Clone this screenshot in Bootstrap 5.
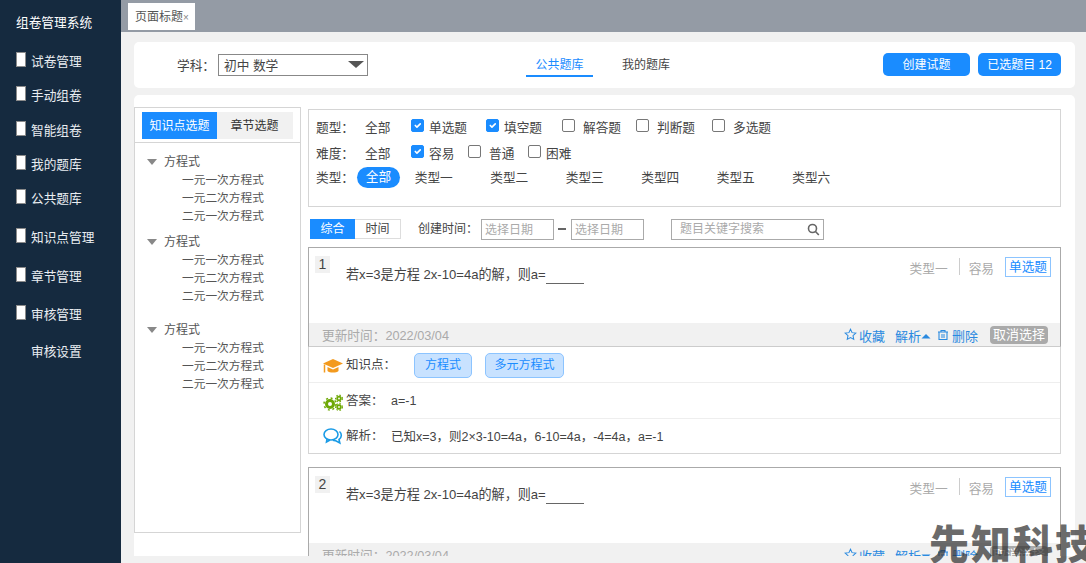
<!DOCTYPE html>
<html lang="zh">
<head>
<meta charset="utf-8">
<title>组卷管理系统</title>
<link rel="stylesheet" href="https://cdn.jsdelivr.net/npm/bootstrap@5.3.0/dist/css/bootstrap.min.css">
<style>
html,body{height:563px;overflow:hidden}
body{font-family:"Liberation Sans","Noto Sans CJK SC",sans-serif;font-size:12.7px;color:#444;background:#f1f1f1;line-height:18px;position:relative}
.shell{height:563px}
.side{width:121px;background:#152a3f;color:#e9edf1;padding-top:14px}
.side-title{padding-left:16px;height:31px;line-height:18px;color:#fff}
.side-item{height:34.25px;padding-left:16px;display:flex;align-items:center;gap:5px}
.side-item.wide{height:38.5px}
.side-item.gap-after{margin-bottom:2.5px}
.side-item.last{margin-top:1px}
.side-box{width:10px;height:15px;background:#fff;border:1px solid #8b8b8b;margin-top:-5px}
.side-space{width:10px}
.main-col{min-width:0}
.topbar{height:32px;background:#949ba5;padding:3px 0 0 7px}
.page-tab{width:67px;height:27px;background:#fff;padding-left:7px;line-height:29px;color:#555;font-size:12px}
.page-tab i{font-style:normal;font-size:10px;color:#888}
.head-card{margin:10px 11px 0 13px;height:46px;background:#fff;border-radius:5px;padding:0 14px 0 43px}
.head-label{width:41px;padding-top:1px}
.fake-select{width:150px;height:22px;border:1px solid #888;padding-left:5px;line-height:23px;position:relative}
.caret-down{width:0;height:0;border-left:8px solid transparent;border-right:8px solid transparent;border-top:7px solid #555;display:block}
.fake-select .caret-down{position:absolute;right:3px;top:6px}
.center-tabs{margin-left:158px;font-size:12px}
.ctab{height:24px;line-height:24px;width:67px;text-align:center;color:#444}
.ctab.on{color:#1a8cff;border-bottom:2px solid #1a8cff}
.ctab.next{margin-left:14px;width:78px}
.head-btn{height:23px;background:#1a8cff;color:#fff;border:0;border-radius:5px;font-size:12px;padding:0;margin-top:-1px}
.work-card{margin:7px 11px 0 13px;height:461px;background:#fff;border-radius:5px 5px 0 0;overflow:hidden;padding-top:12px}
.left-pane{width:167px;height:426px;border:1px solid #d5d5d5;flex:none;font-size:12px}
.pane-tabs{margin:4px 7px 0;height:27px;background:#f1f1f1;line-height:29px;text-align:center}
.pane-tab{width:75px;color:#333}
.pane-tab.on{background:#1a8cff;color:#fff}
.pane-line{border-top:1px solid #d5d5d5;margin-top:3px;padding:10px 0 0 12px;color:#555}
.tree-head{display:flex;align-items:center;gap:7px}
.tree-head .caret-down{border-left-width:5px;border-right-width:5px;border-top:6px solid #888}
.tree-kid{padding-left:35px;font-size:11.7px}
.tree-group{margin-bottom:8px}
.tree-group.more{margin-bottom:16px}
.right-pane{width:753px;margin-left:7px;flex:none;margin-top:2px}
.filter-box{height:98px;border:1px solid #d5d5d5;padding-top:5px;color:#444}
.f-row{height:26px;display:flex;align-items:center;padding-left:7px}
.f-row.third{height:25px;margin-top:-2px}
.f-label{width:49px;flex:none}
.f-label.tight{width:41px;margin-top:1px}
.form-check-input.chk{width:13px;height:13px;margin:-5px 5px 0 0;border-radius:2px;border-color:#777;flex:none}
.form-check-input.chk:checked{background-color:#1a8cff;border-color:#1a8cff}
.form-check-input.chk.wide{margin-right:8px}
.f-all{width:46px}
.f-opt{display:flex;align-items:center;flex:none}
.pill-on{width:43px;height:21px;border-radius:11px;background:#1a8cff;color:#fff;text-align:center;line-height:21px}
.type-opt{width:75.5px;text-align:center;flex:none;margin-top:1px}
.type-start{margin-left:-4px}
.tool-row{height:22px;margin-top:11px;padding-left:2px;font-size:12px}
.seg{width:45px;height:20px;line-height:19px;text-align:center;border:1px solid #ddd}
.seg.on{background:#1a8cff;border-color:#1a8cff;color:#fff}
.seg+.seg{width:46px;border-left:0}
.date-box{width:73px;height:21px;border:1px solid #aaa;color:#aaa;padding-left:3px;line-height:21px}
.dash{width:8px;height:2px;background:#666;margin:0 5px 0 4px}
.search-box{width:153px;height:21px;border:1px solid #aaa;margin-left:27px;color:#aaa;padding:0 3px 0 8px;line-height:21px}
.q-card{border:1px solid #d5d5d5;border-top:0;margin-top:7px;margin-bottom:13px}
.q-top{border:1px solid #aaa;border-bottom:0;margin:0 -1px;height:76px;position:relative;padding:8px 9px 0 6px}
.q-num{width:15px;height:17px;background:#f1f1f1;line-height:17px;text-align:center;font-size:14px;color:#444;flex:none}
.q-text{margin-left:16px;margin-top:10px;color:#444;font-size:13.1px}
.blank{display:inline-block;width:38px;border-bottom:1px solid #666;height:18px;vertical-align:top}
.q-meta{color:#aaa;margin-top:1px}
.q-meta-txt{padding-top:3px}
.q-sep{width:1px;height:17px;background:#ccc;margin:1px 9px 0 11px}
.q-tag{height:20px;width:46px;line-height:18px;border:1px solid #8cc4ff;color:#1a8cff;text-align:center;margin-left:11px}
.q-foot{border-left:1px solid #aaa;border-right:1px solid #aaa;border-bottom:1px solid #ccc;margin:0 -1px;height:24px;background:#f1f1f1;padding:3px 12px 0 13px}
.q-date{color:#aaa;font-size:12.7px;padding-top:1px}
.q-act{color:#2a8ae0;padding-top:2px;font-size:13px}
.q-act svg{flex:none}
.undo-btn{background:#aaa;color:#fff;border-radius:4px;height:18px;width:58px;line-height:18px;text-align:center;margin-left:12px;margin-top:-2px;font-size:13px}
.q-row{display:flex;align-items:center;padding-left:14px;border-bottom:1px solid #eee;height:36px;color:#444;font-size:12.5px}
.q-row.end{border-bottom:0;height:34px}
.q-ico{width:23px;flex:none;display:flex}
.ico-low{margin-top:3px}
.q-lab{width:45px;flex:none;white-space:nowrap}
.txt-low{margin-top:2px}
.k-tag{height:25px;line-height:23px;padding:0;text-align:center;background:#c8e2ff;border:1px solid #8cc4ff;border-radius:5px;color:#1a8cff;font-size:12px;margin-top:1px}
.watermark{position:absolute;left:929px;top:516px;font-family:"Noto Sans CJK SC",sans-serif;font-size:40px;line-height:52px;font-weight:900;letter-spacing:2px;color:rgba(50,50,50,.72);white-space:nowrap;pointer-events:none}
</style>
</head>
<body>
<div class="d-flex shell">
  <aside class="side flex-shrink-0">
    <div class="side-title">组卷管理系统</div>
    <div class="side-item"><span class="side-box"></span><span>试卷管理</span></div>
    <div class="side-item"><span class="side-box"></span><span>手动组卷</span></div>
    <div class="side-item"><span class="side-box"></span><span>智能组卷</span></div>
    <div class="side-item"><span class="side-box"></span><span>我的题库</span></div>
    <div class="side-item gap-after"><span class="side-box"></span><span>公共题库</span></div>
    <div class="side-item wide"><span class="side-box"></span><span>知识点管理</span></div>
    <div class="side-item wide"><span class="side-box"></span><span>章节管理</span></div>
    <div class="side-item wide"><span class="side-box"></span><span>审核管理</span></div>
    <div class="side-item last"><span class="side-space"></span><span>审核设置</span></div>
  </aside>
  <main class="main-col flex-grow-1">
    <div class="topbar"><div class="page-tab">页面标题<i>×</i></div></div>
    <div class="head-card d-flex align-items-center">
      <span class="head-label">学科：</span>
      <div class="fake-select">初中 数学<span class="caret-down"></span></div>
      <div class="center-tabs d-flex"><div class="ctab on">公共题库</div><div class="ctab next">我的题库</div></div>
      <div class="ms-auto d-flex gap-2">
        <button class="head-btn" style="width:87px">创建试题</button>
        <button class="head-btn" style="width:83px">已选题目 12</button>
      </div>
    </div>
    <div class="work-card d-flex">
      <div class="left-pane">
        <div class="pane-tabs d-flex"><div class="pane-tab on">知识点选题</div><div class="pane-tab">章节选题</div></div>
        <div class="pane-line">
          <div class="tree-group">
            <div class="tree-head"><span class="caret-down"></span><span>方程式</span></div>
            <div class="tree-kid">一元一次方程式</div><div class="tree-kid">一元二次方程式</div><div class="tree-kid">二元一次方程式</div>
          </div>
          <div class="tree-group more">
            <div class="tree-head"><span class="caret-down"></span><span>方程式</span></div>
            <div class="tree-kid">一元一次方程式</div><div class="tree-kid">一元二次方程式</div><div class="tree-kid">二元一次方程式</div>
          </div>
          <div class="tree-group">
            <div class="tree-head"><span class="caret-down"></span><span>方程式</span></div>
            <div class="tree-kid">一元一次方程式</div><div class="tree-kid">一元二次方程式</div><div class="tree-kid">二元一次方程式</div>
          </div>
        </div>
      </div>
      <div class="right-pane">
        <div class="filter-box">
          <div class="f-row">
            <span class="f-label">题型：</span><span class="f-all">全部</span>
            <label class="f-opt" style="width:75px"><input class="form-check-input chk" type="checkbox" checked>单选题</label>
            <label class="f-opt" style="width:76px"><input class="form-check-input chk" type="checkbox" checked>填空题</label>
            <label class="f-opt" style="width:74px"><input class="form-check-input chk wide" type="checkbox">解答题</label>
            <label class="f-opt" style="width:76px"><input class="form-check-input chk wide" type="checkbox">判断题</label>
            <label class="f-opt"><input class="form-check-input chk wide" type="checkbox">多选题</label>
          </div>
          <div class="f-row">
            <span class="f-label">难度：</span><span class="f-all">全部</span>
            <label class="f-opt" style="width:57px"><input class="form-check-input chk" type="checkbox" checked>容易</label>
            <label class="f-opt" style="width:60px"><input class="form-check-input chk wide" type="checkbox">普通</label>
            <label class="f-opt"><input class="form-check-input chk" type="checkbox">困难</label>
          </div>
          <div class="f-row third">
            <span class="f-label tight">类型：</span><span class="pill-on">全部</span>
            <span class="type-opt type-start">类型一</span><span class="type-opt">类型二</span><span class="type-opt">类型三</span><span class="type-opt">类型四</span><span class="type-opt">类型五</span><span class="type-opt">类型六</span>
          </div>
        </div>
        <div class="tool-row d-flex align-items-center">
          <div class="seg on">综合</div><div class="seg">时间</div>
          <span style="width:63px;margin-left:17px">创建时间：</span>
          <div class="date-box">选择日期</div><span class="dash"></span><div class="date-box">选择日期</div>
          <div class="search-box d-flex align-items-center justify-content-between"><span>题目关键字搜索</span>
            <svg width="13" height="13" viewBox="0 0 13 13" fill="none" stroke="#666" stroke-width="1.6"><circle cx="5.500" cy="5.500" r="4"/><path d="M8.500 8.500l3.300 3.500"/></svg></div>
        </div>

        <div class="q-card">
          <div class="q-top d-flex">
            <div class="q-num">1</div>
            <div class="q-text">若x=3是方程 2x-10=4a的解，则a=<span class="blank"></span></div>
            <div class="ms-auto d-flex align-items-start q-meta"><span class="q-meta-txt">类型一</span><span class="q-sep"></span><span class="q-meta-txt">容易</span><span class="q-tag">单选题</span></div>
          </div>
          <div class="q-foot d-flex justify-content-between">
            <span class="q-date">更新时间：2022/03/04</span>
            <div class="q-act d-flex">
              <svg width="13" height="13" viewBox="0 0 14 14" fill="none" stroke="#2a8ae0" stroke-width="1.100"><path d="M7 1.300l1.700 3.700 4 .5-3 2.700.8 4L7 10.300 3.500 12.200l.8-4-3-2.700 4-.5z"/></svg>
              <span style="margin-left:2px">收藏</span>
              <span style="margin-left:10px">解析</span>
              <svg width="10" height="18" viewBox="0 0 10 18" fill="#2a8ae0"><path d="M0.500 10.500L5 6l4.500 4.500z"/></svg>
              <svg width="12" height="14" viewBox="0 0 12 14" fill="none" stroke="#2a8ae0" stroke-width="1.100" style="margin-left:6px"><path d="M1 4h10M2 4v7.500h8V4M4 4V2.500h4V4M4 7h4M4 9h4"/></svg>
              <span style="margin-left:3px">删除</span>
              <span class="undo-btn">取消选择</span>
            </div>
          </div>
          <div class="q-row">
            <span class="q-ico ico-low"><svg width="20" height="17" viewBox="0 0 20 17"><path d="M10 1L20 5.500 10 10 0 5.500z" fill="#f39a1e"/><path d="M4.500 9v4c2 2 9 2 11 0V9l-5.500 2.500z" fill="#f39a1e"/><path d="M1.500 6.500v8" stroke="#f39a1e" stroke-width="1.500"/></svg></span>
            <span class="q-lab">知识点：</span>
            <span class="k-tag" style="width:58px;margin-left:23px">方程式</span>
            <span class="k-tag" style="width:79px;margin-left:13px">多元方程式</span>
          </div>
          <div class="q-row">
            <span class="q-ico ico-low"><svg width="20" height="17" viewBox="0 0 20 17"><g fill="none" stroke="#6ea806"><circle cx="7" cy="10" r="3.500" stroke-width="3"/><circle cx="7" cy="10" r="6" stroke-width="1.500" stroke-dasharray="2 2.700"/><circle cx="16" cy="4.500" r="1.800" stroke-width="1.800"/><circle cx="16" cy="4.500" r="3.400" stroke-width="1.200" stroke-dasharray="1.500 1.700"/><circle cx="16" cy="13" r="1.800" stroke-width="1.800"/><circle cx="16" cy="13" r="3.400" stroke-width="1.200" stroke-dasharray="1.500 1.700"/></g></svg></span>
            <span class="q-lab">答案：</span><span>a=-1</span>
          </div>
          <div class="q-row end">
            <span class="q-ico"><svg width="20" height="17" viewBox="0 0 20 17" fill="none" stroke="#1a9be6" stroke-width="1.600"><ellipse cx="8" cy="6.500" rx="7" ry="5.500"/><path d="M4 11l-.5 3 3.500-2"/><path d="M16.500 3.500c2.500 2 2.500 6-.5 8l.8 3.500-4-2.300c-1 .1-2 0-3-.4"/></svg></span>
            <span class="q-lab">解析：</span><span class="txt-low">已知x=3，则2×3-10=4a，6-10=4a，-4=4a，a=-1</span>
          </div>
        </div>

        <div class="q-card">
          <div class="q-top d-flex">
            <div class="q-num">2</div>
            <div class="q-text">若x=3是方程 2x-10=4a的解，则a=<span class="blank"></span></div>
            <div class="ms-auto d-flex align-items-start q-meta"><span class="q-meta-txt">类型一</span><span class="q-sep"></span><span class="q-meta-txt">容易</span><span class="q-tag">单选题</span></div>
          </div>
          <div class="q-foot d-flex justify-content-between">
            <span class="q-date">更新时间：2022/03/04</span>
            <div class="q-act d-flex">
              <svg width="13" height="13" viewBox="0 0 14 14" fill="none" stroke="#2a8ae0" stroke-width="1.100"><path d="M7 1.300l1.700 3.700 4 .5-3 2.700.8 4L7 10.300 3.500 12.200l.8-4-3-2.700 4-.5z"/></svg>
              <span style="margin-left:2px">收藏</span>
              <span style="margin-left:10px">解析</span>
              <svg width="10" height="18" viewBox="0 0 10 18" fill="#2a8ae0"><path d="M0.500 6.500L5 11l4.500-4.500z"/></svg>
              <svg width="12" height="14" viewBox="0 0 12 14" fill="none" stroke="#2a8ae0" stroke-width="1.100" style="margin-left:6px"><path d="M1 4h10M2 4v7.500h8V4M4 4V2.500h4V4M4 7h4M4 9h4"/></svg>
              <span style="margin-left:3px">删除</span>
              <span class="undo-btn">取消选择</span>
            </div>
          </div>
        </div>
      </div>
    </div>
  </main>
</div>
<div class="watermark">先知科技</div>
<script src="https://cdn.jsdelivr.net/npm/bootstrap@5.3.0/dist/js/bootstrap.bundle.min.js"></script>
</body>
</html>
